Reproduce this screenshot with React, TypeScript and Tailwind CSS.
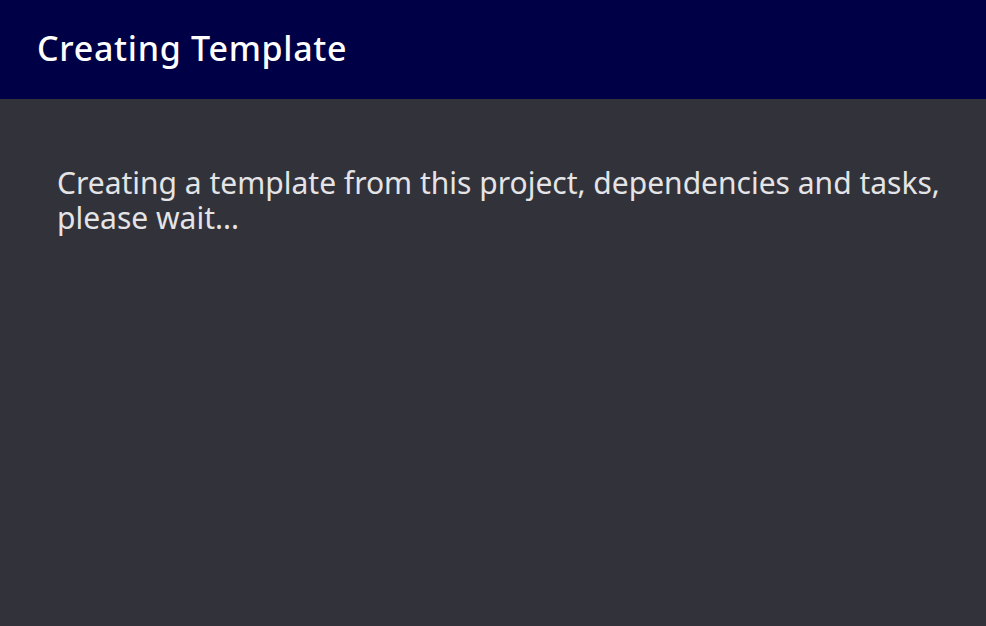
export default function App() {
  return (
    <div className="flex h-[626px] w-[986px] flex-col bg-[#32323a] font-['Noto_Sans',sans-serif]">
      <header className="flex h-[99px] shrink-0 items-center bg-[#000046] px-[37px] pb-[4px]">
        <h1 className="text-[34px] font-medium leading-none tracking-[0.7px] text-white">Creating Template</h1>
      </header>
      <main className="flex-1 px-[57px] pt-[66px] pr-[40px]">
        <p className="text-[30px] leading-[35px] text-[#e4e4e6]">
          Creating a template from this project, dependencies and tasks, please wait...
        </p>
      </main>
    </div>
  );
}
